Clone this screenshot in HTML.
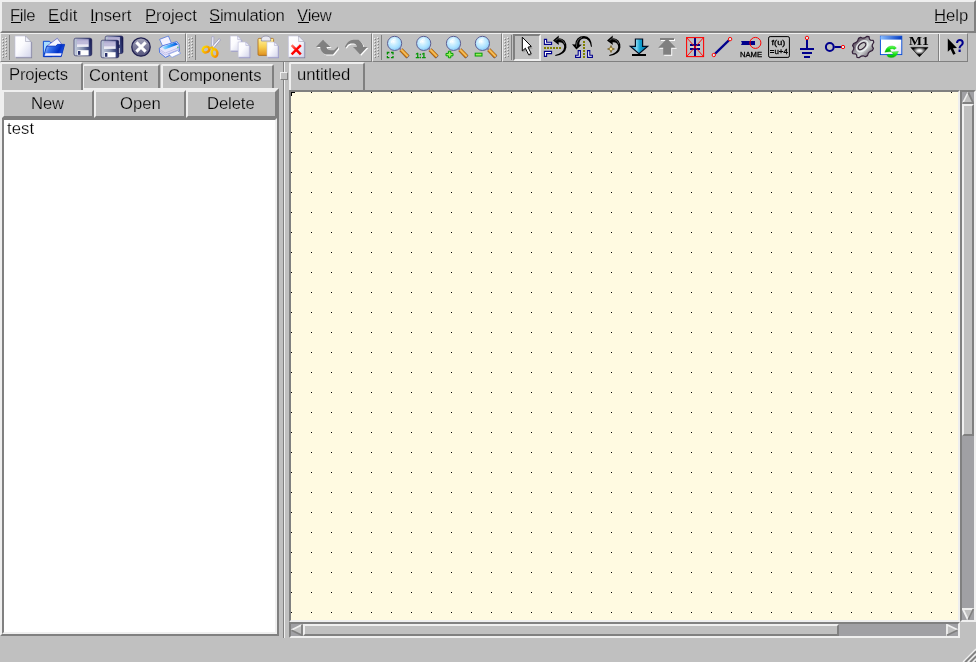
<!DOCTYPE html>
<html lang="en">
<head>
<meta charset="utf-8">
<title>Qucs</title>
<style>
html,body{margin:0;padding:0;}
body{width:976px;height:662px;overflow:hidden;background:#c0c0c0;position:relative;
 font-family:"Liberation Sans",sans-serif;font-size:16.67px;color:#000;}
.a{position:absolute;box-sizing:border-box;}
.r2{border:2px solid;border-color:#efefef #808080 #808080 #efefef;}
.r1{border:1px solid;border-color:#efefef #808080 #808080 #efefef;}
.s2{border:2px solid;border-color:#808080 #efefef #efefef #808080;}
.t{position:absolute;white-space:nowrap;line-height:20px;height:20px;will-change:transform;-webkit-text-stroke:0.25px #c0c0c0;}
#tTest{-webkit-text-stroke-color:#fff;}
u{text-decoration:none;position:relative;display:inline-block;}
u::after{content:'';position:absolute;left:1px;right:-1px;top:16px;height:1px;background:#000;}
.tab{border:2px solid;border-color:#efefef #808080 transparent #efefef;border-bottom:none;border-radius:2px 2px 0 0;}
.sep{position:absolute;width:1px;background:#808080;}
svg{position:absolute;overflow:visible;}
</style>
</head>
<body>
<!-- menubar -->
<div class="a r2" id="menubar" style="left:0;top:0;width:976px;height:33px;"></div>
<span class="t" id="mF" style="left:10.14px;top:6px;letter-spacing:-0.426px;"><u>F</u>ile</span>
<span class="t" id="mE" style="left:48.04px;top:6px;letter-spacing:0.265px;"><u>E</u>dit</span>
<span class="t" id="mI" style="left:90.3px;top:6px;letter-spacing:-0.076px;"><u>I</u>nsert</span>
<span class="t" id="mP" style="left:144.94px;top:6px;letter-spacing:-0.015px;"><u>P</u>roject</span>
<span class="t" id="mS" style="left:209.44px;top:6px;letter-spacing:-0.221px;"><u>S</u>imulation</span>
<span class="t" id="mV" style="left:296.9px;top:6px;letter-spacing:-0.459px;"><u>V</u>iew</span>
<span class="t" id="mH" style="left:934.34px;top:6px;letter-spacing:-0.034px;"><u>H</u>elp</span>
<!-- toolbars -->
<div class="a r1" style="left:0px;top:33px;width:186px;height:29px;"></div><i class="a" style="left:2px;top:38px;width:1px;height:1px;background:#efefef"></i><i class="a" style="left:3px;top:39px;width:1px;height:1px;background:#808080"></i><i class="a" style="left:5px;top:37px;width:1px;height:1px;background:#efefef"></i><i class="a" style="left:6px;top:38px;width:1px;height:1px;background:#808080"></i><i class="a" style="left:2px;top:41px;width:1px;height:1px;background:#efefef"></i><i class="a" style="left:3px;top:42px;width:1px;height:1px;background:#808080"></i><i class="a" style="left:5px;top:40px;width:1px;height:1px;background:#efefef"></i><i class="a" style="left:6px;top:41px;width:1px;height:1px;background:#808080"></i><i class="a" style="left:2px;top:44px;width:1px;height:1px;background:#efefef"></i><i class="a" style="left:3px;top:45px;width:1px;height:1px;background:#808080"></i><i class="a" style="left:5px;top:43px;width:1px;height:1px;background:#efefef"></i><i class="a" style="left:6px;top:44px;width:1px;height:1px;background:#808080"></i><i class="a" style="left:2px;top:47px;width:1px;height:1px;background:#efefef"></i><i class="a" style="left:3px;top:48px;width:1px;height:1px;background:#808080"></i><i class="a" style="left:5px;top:46px;width:1px;height:1px;background:#efefef"></i><i class="a" style="left:6px;top:47px;width:1px;height:1px;background:#808080"></i><i class="a" style="left:2px;top:50px;width:1px;height:1px;background:#efefef"></i><i class="a" style="left:3px;top:51px;width:1px;height:1px;background:#808080"></i><i class="a" style="left:5px;top:49px;width:1px;height:1px;background:#efefef"></i><i class="a" style="left:6px;top:50px;width:1px;height:1px;background:#808080"></i><i class="a" style="left:2px;top:53px;width:1px;height:1px;background:#efefef"></i><i class="a" style="left:3px;top:54px;width:1px;height:1px;background:#808080"></i><i class="a" style="left:5px;top:52px;width:1px;height:1px;background:#efefef"></i><i class="a" style="left:6px;top:53px;width:1px;height:1px;background:#808080"></i><i class="a" style="left:2px;top:56px;width:1px;height:1px;background:#efefef"></i><i class="a" style="left:3px;top:57px;width:1px;height:1px;background:#808080"></i><i class="a" style="left:5px;top:55px;width:1px;height:1px;background:#efefef"></i><i class="a" style="left:6px;top:56px;width:1px;height:1px;background:#808080"></i><i class="sep" style="left:9px;top:35px;height:25px"></i><div class="a r1" style="left:186px;top:33px;width:186px;height:29px;"></div><i class="a" style="left:188px;top:38px;width:1px;height:1px;background:#efefef"></i><i class="a" style="left:189px;top:39px;width:1px;height:1px;background:#808080"></i><i class="a" style="left:191px;top:37px;width:1px;height:1px;background:#efefef"></i><i class="a" style="left:192px;top:38px;width:1px;height:1px;background:#808080"></i><i class="a" style="left:188px;top:41px;width:1px;height:1px;background:#efefef"></i><i class="a" style="left:189px;top:42px;width:1px;height:1px;background:#808080"></i><i class="a" style="left:191px;top:40px;width:1px;height:1px;background:#efefef"></i><i class="a" style="left:192px;top:41px;width:1px;height:1px;background:#808080"></i><i class="a" style="left:188px;top:44px;width:1px;height:1px;background:#efefef"></i><i class="a" style="left:189px;top:45px;width:1px;height:1px;background:#808080"></i><i class="a" style="left:191px;top:43px;width:1px;height:1px;background:#efefef"></i><i class="a" style="left:192px;top:44px;width:1px;height:1px;background:#808080"></i><i class="a" style="left:188px;top:47px;width:1px;height:1px;background:#efefef"></i><i class="a" style="left:189px;top:48px;width:1px;height:1px;background:#808080"></i><i class="a" style="left:191px;top:46px;width:1px;height:1px;background:#efefef"></i><i class="a" style="left:192px;top:47px;width:1px;height:1px;background:#808080"></i><i class="a" style="left:188px;top:50px;width:1px;height:1px;background:#efefef"></i><i class="a" style="left:189px;top:51px;width:1px;height:1px;background:#808080"></i><i class="a" style="left:191px;top:49px;width:1px;height:1px;background:#efefef"></i><i class="a" style="left:192px;top:50px;width:1px;height:1px;background:#808080"></i><i class="a" style="left:188px;top:53px;width:1px;height:1px;background:#efefef"></i><i class="a" style="left:189px;top:54px;width:1px;height:1px;background:#808080"></i><i class="a" style="left:191px;top:52px;width:1px;height:1px;background:#efefef"></i><i class="a" style="left:192px;top:53px;width:1px;height:1px;background:#808080"></i><i class="a" style="left:188px;top:56px;width:1px;height:1px;background:#efefef"></i><i class="a" style="left:189px;top:57px;width:1px;height:1px;background:#808080"></i><i class="a" style="left:191px;top:55px;width:1px;height:1px;background:#efefef"></i><i class="a" style="left:192px;top:56px;width:1px;height:1px;background:#808080"></i><i class="sep" style="left:195px;top:35px;height:25px"></i><div class="a r1" style="left:372px;top:33px;width:130px;height:29px;"></div><i class="a" style="left:374px;top:38px;width:1px;height:1px;background:#efefef"></i><i class="a" style="left:375px;top:39px;width:1px;height:1px;background:#808080"></i><i class="a" style="left:377px;top:37px;width:1px;height:1px;background:#efefef"></i><i class="a" style="left:378px;top:38px;width:1px;height:1px;background:#808080"></i><i class="a" style="left:374px;top:41px;width:1px;height:1px;background:#efefef"></i><i class="a" style="left:375px;top:42px;width:1px;height:1px;background:#808080"></i><i class="a" style="left:377px;top:40px;width:1px;height:1px;background:#efefef"></i><i class="a" style="left:378px;top:41px;width:1px;height:1px;background:#808080"></i><i class="a" style="left:374px;top:44px;width:1px;height:1px;background:#efefef"></i><i class="a" style="left:375px;top:45px;width:1px;height:1px;background:#808080"></i><i class="a" style="left:377px;top:43px;width:1px;height:1px;background:#efefef"></i><i class="a" style="left:378px;top:44px;width:1px;height:1px;background:#808080"></i><i class="a" style="left:374px;top:47px;width:1px;height:1px;background:#efefef"></i><i class="a" style="left:375px;top:48px;width:1px;height:1px;background:#808080"></i><i class="a" style="left:377px;top:46px;width:1px;height:1px;background:#efefef"></i><i class="a" style="left:378px;top:47px;width:1px;height:1px;background:#808080"></i><i class="a" style="left:374px;top:50px;width:1px;height:1px;background:#efefef"></i><i class="a" style="left:375px;top:51px;width:1px;height:1px;background:#808080"></i><i class="a" style="left:377px;top:49px;width:1px;height:1px;background:#efefef"></i><i class="a" style="left:378px;top:50px;width:1px;height:1px;background:#808080"></i><i class="a" style="left:374px;top:53px;width:1px;height:1px;background:#efefef"></i><i class="a" style="left:375px;top:54px;width:1px;height:1px;background:#808080"></i><i class="a" style="left:377px;top:52px;width:1px;height:1px;background:#efefef"></i><i class="a" style="left:378px;top:53px;width:1px;height:1px;background:#808080"></i><i class="a" style="left:374px;top:56px;width:1px;height:1px;background:#efefef"></i><i class="a" style="left:375px;top:57px;width:1px;height:1px;background:#808080"></i><i class="a" style="left:377px;top:55px;width:1px;height:1px;background:#efefef"></i><i class="a" style="left:378px;top:56px;width:1px;height:1px;background:#808080"></i><i class="sep" style="left:381px;top:35px;height:25px"></i><div class="a r1" style="left:502px;top:33px;width:466px;height:29px;"></div><i class="a" style="left:504px;top:38px;width:1px;height:1px;background:#efefef"></i><i class="a" style="left:505px;top:39px;width:1px;height:1px;background:#808080"></i><i class="a" style="left:507px;top:37px;width:1px;height:1px;background:#efefef"></i><i class="a" style="left:508px;top:38px;width:1px;height:1px;background:#808080"></i><i class="a" style="left:504px;top:41px;width:1px;height:1px;background:#efefef"></i><i class="a" style="left:505px;top:42px;width:1px;height:1px;background:#808080"></i><i class="a" style="left:507px;top:40px;width:1px;height:1px;background:#efefef"></i><i class="a" style="left:508px;top:41px;width:1px;height:1px;background:#808080"></i><i class="a" style="left:504px;top:44px;width:1px;height:1px;background:#efefef"></i><i class="a" style="left:505px;top:45px;width:1px;height:1px;background:#808080"></i><i class="a" style="left:507px;top:43px;width:1px;height:1px;background:#efefef"></i><i class="a" style="left:508px;top:44px;width:1px;height:1px;background:#808080"></i><i class="a" style="left:504px;top:47px;width:1px;height:1px;background:#efefef"></i><i class="a" style="left:505px;top:48px;width:1px;height:1px;background:#808080"></i><i class="a" style="left:507px;top:46px;width:1px;height:1px;background:#efefef"></i><i class="a" style="left:508px;top:47px;width:1px;height:1px;background:#808080"></i><i class="a" style="left:504px;top:50px;width:1px;height:1px;background:#efefef"></i><i class="a" style="left:505px;top:51px;width:1px;height:1px;background:#808080"></i><i class="a" style="left:507px;top:49px;width:1px;height:1px;background:#efefef"></i><i class="a" style="left:508px;top:50px;width:1px;height:1px;background:#808080"></i><i class="a" style="left:504px;top:53px;width:1px;height:1px;background:#efefef"></i><i class="a" style="left:505px;top:54px;width:1px;height:1px;background:#808080"></i><i class="a" style="left:507px;top:52px;width:1px;height:1px;background:#efefef"></i><i class="a" style="left:508px;top:53px;width:1px;height:1px;background:#808080"></i><i class="a" style="left:504px;top:56px;width:1px;height:1px;background:#efefef"></i><i class="a" style="left:505px;top:57px;width:1px;height:1px;background:#808080"></i><i class="a" style="left:507px;top:55px;width:1px;height:1px;background:#efefef"></i><i class="a" style="left:508px;top:56px;width:1px;height:1px;background:#808080"></i><i class="sep" style="left:511px;top:35px;height:25px"></i><i class="sep" style="left:938px;top:34px;height:27px"></i><i class="sep" style="left:939px;top:34px;height:27px;background:#efefef"></i>
<div class="a s2" style="left:513px;top:34px;width:28px;height:27px;"></div>
<svg id="icons" style="left:0;top:33px;will-change:transform" width="976" height="29" viewBox="0 33 976 29">
<defs>
<linearGradient id="gPage" x1="0" y1="0" x2="1" y2="1"><stop offset="0" stop-color="#ffffff"/><stop offset="0.45" stop-color="#fbfbfe"/><stop offset="1" stop-color="#d4d6ec"/></linearGradient>
<linearGradient id="gFl" x1="0" y1="0.1" x2="1" y2="0"><stop offset="0" stop-color="#c4ccdc"/><stop offset="0.45" stop-color="#8490b0"/><stop offset="0.8" stop-color="#36407a"/><stop offset="1" stop-color="#0e0e44"/></linearGradient>
<linearGradient id="gLab" x1="0" y1="0" x2="0" y2="1"><stop offset="0" stop-color="#a9a4cc"/><stop offset="0.6" stop-color="#d0cde6"/><stop offset="1" stop-color="#ffffff"/></linearGradient>
<radialGradient id="gLens" cx="0.42" cy="0.36" r="0.62"><stop offset="0" stop-color="#ffffff"/><stop offset="0.35" stop-color="#d0f0ff"/><stop offset="0.75" stop-color="#a8e0ff"/><stop offset="1" stop-color="#90c8f4"/></radialGradient>
<linearGradient id="gHan" x1="0" y1="1" x2="1" y2="0"><stop offset="0.3" stop-color="#8c4804"/><stop offset="0.4" stop-color="#d88c20"/><stop offset="0.52" stop-color="#fccc70"/><stop offset="0.62" stop-color="#e09828"/><stop offset="0.7" stop-color="#98540c"/></linearGradient>
<linearGradient id="gClose" x1="0" y1="0" x2="0" y2="1"><stop offset="0" stop-color="#a4a4ba"/><stop offset="1" stop-color="#54547c"/></linearGradient>
<linearGradient id="gFold" x1="0" y1="0" x2="1" y2="0.3"><stop offset="0" stop-color="#d8ecff"/><stop offset="0.35" stop-color="#3c78f0"/><stop offset="0.8" stop-color="#0030c8"/><stop offset="1" stop-color="#2050e0"/></linearGradient>
<linearGradient id="gClip" x1="0" y1="0" x2="0" y2="1"><stop offset="0" stop-color="#fff0a0"/><stop offset="0.5" stop-color="#f8d050"/><stop offset="1" stop-color="#e09020"/></linearGradient>
<linearGradient id="gSc" x1="0" y1="0" x2="1" y2="1"><stop offset="0" stop-color="#ffe000"/><stop offset="1" stop-color="#f08000"/></linearGradient>
<linearGradient id="gDn" x1="0" y1="0" x2="1" y2="0"><stop offset="0" stop-color="#0080b8"/><stop offset="0.36" stop-color="#7cd4f0"/><stop offset="0.56" stop-color="#10a0d0"/><stop offset="1" stop-color="#006898"/></linearGradient>
<linearGradient id="gGear" x1="0" y1="0" x2="1" y2="1"><stop offset="0.05" stop-color="#302034"/><stop offset="0.25" stop-color="#6c6070"/><stop offset="0.45" stop-color="#a4a4a8"/><stop offset="0.6" stop-color="#d0d4d4"/><stop offset="0.76" stop-color="#8c8890"/><stop offset="0.97" stop-color="#382838"/></linearGradient>
<linearGradient id="gTitle" x1="0" y1="0" x2="1" y2="0"><stop offset="0" stop-color="#8cc0ff"/><stop offset="1" stop-color="#0038c0"/></linearGradient>
<linearGradient id="gWin" x1="0" y1="0" x2="1" y2="1"><stop offset="0" stop-color="#ffffff"/><stop offset="0.6" stop-color="#ffffff"/><stop offset="1" stop-color="#dcdcf4"/></linearGradient>
<radialGradient id="gTri" cx="0.5" cy="0.36" r="0.42"><stop offset="0" stop-color="#ffffff"/><stop offset="0.3" stop-color="#e0e0e0"/><stop offset="0.65" stop-color="#707070"/><stop offset="1" stop-color="#000000"/></radialGradient>
<linearGradient id="gPrn" x1="0" y1="0" x2="1" y2="0"><stop offset="0" stop-color="#b0ecff"/><stop offset="0.5" stop-color="#30a0f8"/><stop offset="1" stop-color="#0050d8"/></linearGradient>
<linearGradient id="gGrn" x1="0" y1="0" x2="0" y2="1"><stop offset="0" stop-color="#70ff60"/><stop offset="0.5" stop-color="#10e010"/><stop offset="1" stop-color="#00a800"/></linearGradient>
<linearGradient id="gRed" x1="0" y1="0" x2="1" y2="1"><stop offset="0" stop-color="#ff8070"/><stop offset="0.5" stop-color="#ff0000"/><stop offset="1" stop-color="#f00000"/></linearGradient>
</defs>
<!-- new --><path d="M16,57.6 H31.5 V42" fill="none" stroke="#8888a0" stroke-width="1.2"/><path d="M15,36 H25.5 L31.0,42 V57.1 H15 Z" fill="url(#gPage)" stroke="#c0c0dc" stroke-width="0.6"/><path d="M25.5,36 V41.5 H31.0 Z" fill="#eef0fa" stroke="#8888a0" stroke-width="0.5" opacity="0.9"/>
<!-- open -->
<path d="M43.4,41.3 H49.5 L50.5,42.6 H52 V56.6 H43.4 Z" fill="#a8dcff" stroke="#0040d0" stroke-width="0.9"/>
<path d="M47,46 L57.3,38.3 L61.4,43.8 L50,52 Z" fill="#f4f4ff" stroke="#5058c0" stroke-width="0.7"/>
<path d="M46.6,46.2 H56 L57.4,44.4 H64.6 L61.2,56.6 H43.6 Z" fill="url(#gFold)" stroke="#0030c0" stroke-width="0.9"/>
<path d="M45.6,53.3 H61.6 L60.9,55.8 H44.8 Z" fill="#f4f0ff"/>

<!-- save --><rect x="74" y="38.2" width="17.8" height="17.6" rx="1.8" fill="url(#gFl)" stroke="#181850" stroke-width="0.6"/><rect x="77" y="39.2" width="11.7" height="7.6" fill="url(#gLab)"/><rect x="77" y="42.800000000000004" width="11.7" height="0.6" fill="#a09cc4" opacity="0.8"/><rect x="77.4" y="50.2" width="11.2" height="5.2" fill="#ffffff"/><rect x="78" y="51.0" width="2.4" height="3.8" fill="#28306c"/>
<!-- saveall --><rect x="105.2" y="36" width="17.8" height="17.6" rx="1.8" fill="url(#gFl)" stroke="#181850" stroke-width="0.6"/><rect x="108.2" y="37" width="11.7" height="7.6" fill="url(#gLab)"/><rect x="108.2" y="40.6" width="11.7" height="0.6" fill="#a09cc4" opacity="0.8"/><rect x="108.60000000000001" y="48" width="11.2" height="5.2" fill="#ffffff"/><rect x="109.2" y="48.8" width="2.4" height="3.8" fill="#28306c"/><rect x="101" y="40.2" width="17.8" height="17.6" rx="1.8" fill="url(#gFl)" stroke="#181850" stroke-width="0.6"/><rect x="104" y="41.2" width="11.7" height="7.6" fill="url(#gLab)"/><rect x="104" y="44.800000000000004" width="11.7" height="0.6" fill="#a09cc4" opacity="0.8"/><rect x="104.4" y="52.2" width="11.2" height="5.2" fill="#ffffff"/><rect x="105" y="53.0" width="2.4" height="3.8" fill="#28306c"/>
<!-- close -->
<circle cx="141" cy="47" r="9.2" fill="url(#gClose)" stroke="#202050" stroke-width="1.3"/>
<path d="M136.4,42.4 L145.6,51.6 M145.6,42.4 L136.4,51.6" stroke="#ffffff" stroke-width="3"/>

<!-- print -->
<path d="M159.6,39.4 L168.4,36 L171.6,43.6 L163,47 Z" fill="#f4f2ff" stroke="#4068d8" stroke-width="0.7"/>
<path d="M159.3,48.2 L163,45.6 L176.8,41.6 L179,44.6 L179.4,50.8 L165.4,57.4 L159.6,52.6 Z" fill="#e8e6fa" stroke="#3060e0" stroke-width="0.8"/>
<path d="M162,47 L175.6,42.4 L178,44.6 L164.8,49.6 Z" fill="url(#gPrn)"/>
<path d="M159.8,49.5 L165.2,53 L179,47.6 M159.8,51 L165.3,54.8 L179.2,49.2" stroke="#a8a8e0" stroke-width="0.6" fill="none"/>
<path d="M168.6,54.2 L177.4,50.6 L180.8,53.2 L172,57.4 Z" fill="#ffffff" stroke="#6080e0" stroke-width="0.6"/>
<rect x="177.4" y="46.6" width="0.9" height="1.6" fill="#20c040"/>

<!-- cut -->
<path d="M212,36.6 L213.8,36.8 L213.6,47.6 L211.6,47 Z" fill="#f8f8ff" stroke="#9090c0" stroke-width="0.6"/>
<path d="M219.2,38.6 L220.4,40 L213.2,48.6 L211.4,47.4 Z" fill="#f8f8ff" stroke="#7878b0" stroke-width="0.6"/>
<ellipse cx="206" cy="49.6" rx="3.4" ry="2.8" transform="rotate(-20 206 49.6)" fill="none" stroke="url(#gSc)" stroke-width="2.4"/>
<ellipse cx="214.6" cy="53" rx="2.8" ry="3.8" transform="rotate(-10 214.6 53)" fill="none" stroke="url(#gSc)" stroke-width="2.4"/>
<path d="M209.4,48.2 L212.6,47.4 L213.6,49.6" stroke="#f8c000" stroke-width="1.8" fill="none"/>

<!-- copy --><path d="M231.2,51.2 H241.6 V40" fill="none" stroke="#9c9cc8" stroke-width="1.2"/><path d="M230.2,36 H237.6 L241.1,40 V50.7 H230.2 Z" fill="url(#gPage)" stroke="#c0c0dc" stroke-width="0.6"/><path d="M237.6,36 V39.5 H241.1 Z" fill="#eef0fa" stroke="#9c9cc8" stroke-width="0.5" opacity="0.9"/><path d="M239.2,57.6 H249.79999999999998 V46" fill="none" stroke="#9c9cc8" stroke-width="1.2"/><path d="M238.2,42 H245.79999999999998 L249.29999999999998,46 V57.1 H238.2 Z" fill="url(#gPage)" stroke="#c0c0dc" stroke-width="0.6"/><path d="M245.79999999999998,42 V45.5 H249.29999999999998 Z" fill="#eef0fa" stroke="#9c9cc8" stroke-width="0.5" opacity="0.9"/>
<!-- paste -->
<rect x="258" y="38.4" width="15.6" height="17" rx="1.2" fill="url(#gClip)" stroke="#a86818" stroke-width="0.8"/>
<path d="M261.4,41 V39.4 Q261.4,36 266,36 Q270.6,36 270.6,39.4 V41 Z" fill="#e8e8f0" stroke="#8c8ca4" stroke-width="0.8"/>
<path d="M268,57.6 H278.4 V46" fill="none" stroke="#9c9cc8" stroke-width="1.2"/><path d="M267,42 H274.4 L277.9,46 V57.1 H267 Z" fill="url(#gPage)" stroke="#c0c0dc" stroke-width="0.6"/><path d="M274.4,42 V45.5 H277.9 Z" fill="#eef0fa" stroke="#9c9cc8" stroke-width="0.5" opacity="0.9"/>
<!-- delete --><path d="M289.4,57.6 H304.59999999999997 V42" fill="none" stroke="#8888a0" stroke-width="1.2"/><path d="M288.4,36 H298.59999999999997 L304.09999999999997,42 V57.1 H288.4 Z" fill="url(#gPage)" stroke="#c0c0dc" stroke-width="0.6"/><path d="M298.59999999999997,36 V41.5 H304.09999999999997 Z" fill="#eef0fa" stroke="#8888a0" stroke-width="0.5" opacity="0.9"/><path d="M291.6,45.2 L300.8,54.4 M300.8,45.2 L291.6,54.4" stroke="url(#gRed)" stroke-width="2.6"/>
<!-- undo/redo --><path d="M323,39.8 L330.6,47 L326.4,47 Q327.5,50.2 331,50.2 L334,50.2 L338,46.6 L338,48.6 L333,54.6 L325.6,54.6 Q320.4,52 320.2,47 L316,47 Z" fill="#ffffff" transform="translate(1,1)"/><path d="M323,39.8 L330.6,47 L326.4,47 Q327.5,50.2 331,50.2 L334,50.2 L338,46.6 L338,48.6 L333,54.6 L325.6,54.6 Q320.4,52 320.2,47 L316,47 Z" fill="#808080"/><path d="M345,46.4 Q348.2,39.8 353.4,39.8 L358.4,39.8 Q362.6,42.6 363.4,47 L367.4,47 L360.2,54.8 L353,47 L357,47 Q356.4,44 353.4,43.6 L350.6,43.6 Q347.6,44.2 345.6,47.8 Z" fill="#ffffff" transform="translate(1,1)"/><path d="M345,46.4 Q348.2,39.8 353.4,39.8 L358.4,39.8 Q362.6,42.6 363.4,47 L367.4,47 L360.2,54.8 L353,47 L357,47 Q356.4,44 353.4,43.6 L350.6,43.6 Q347.6,44.2 345.6,47.8 Z" fill="#808080"/>
<path d="M399.6,48.4 L401.8,50.6" stroke="#7474a0" stroke-width="1.8"/><path d="M407.20000000000005,56.2 L408.20000000000005,57.2" stroke="#505078" stroke-width="3.8" stroke-linecap="butt"/><path d="M400.90000000000003,49.6 L407.8,56.7" stroke="url(#gHan)" stroke-width="4.2" stroke-linecap="butt"/><circle cx="394.6" cy="43.4" r="7.1" fill="url(#gLens)" stroke="#5c5c90" stroke-width="1"/><path d="M391.40000000000003,42.8 a4.2,4.2 0 0 1 4.4,-3.8" stroke="#ffffff" stroke-width="0.9" fill="none" opacity="0.9"/>
<path d="M428.7,48.4 L430.9,50.6" stroke="#7474a0" stroke-width="1.8"/><path d="M436.3,56.2 L437.3,57.2" stroke="#505078" stroke-width="3.8" stroke-linecap="butt"/><path d="M430.0,49.6 L436.9,56.7" stroke="url(#gHan)" stroke-width="4.2" stroke-linecap="butt"/><circle cx="423.7" cy="43.4" r="7.1" fill="url(#gLens)" stroke="#5c5c90" stroke-width="1"/><path d="M420.5,42.8 a4.2,4.2 0 0 1 4.4,-3.8" stroke="#ffffff" stroke-width="0.9" fill="none" opacity="0.9"/>
<path d="M458.5,48.4 L460.7,50.6" stroke="#7474a0" stroke-width="1.8"/><path d="M466.1,56.2 L467.1,57.2" stroke="#505078" stroke-width="3.8" stroke-linecap="butt"/><path d="M459.8,49.6 L466.7,56.7" stroke="url(#gHan)" stroke-width="4.2" stroke-linecap="butt"/><circle cx="453.5" cy="43.4" r="7.1" fill="url(#gLens)" stroke="#5c5c90" stroke-width="1"/><path d="M450.3,42.8 a4.2,4.2 0 0 1 4.4,-3.8" stroke="#ffffff" stroke-width="0.9" fill="none" opacity="0.9"/>
<path d="M487.4,48.4 L489.59999999999997,50.6" stroke="#7474a0" stroke-width="1.8"/><path d="M495.0,56.2 L496.0,57.2" stroke="#505078" stroke-width="3.8" stroke-linecap="butt"/><path d="M488.7,49.6 L495.59999999999997,56.7" stroke="url(#gHan)" stroke-width="4.2" stroke-linecap="butt"/><circle cx="482.4" cy="43.4" r="7.1" fill="url(#gLens)" stroke="#5c5c90" stroke-width="1"/><path d="M479.2,42.8 a4.2,4.2 0 0 1 4.4,-3.8" stroke="#ffffff" stroke-width="0.9" fill="none" opacity="0.9"/>
<path d="M387.4,54.4 V52.5 H389.4 M391,52.5 H393 V54.4 M393,56 V57.6 H391 M389.4,57.6 H387.4 V56" stroke="#008c00" stroke-width="1.3" fill="none"/>
<text x="415.4" y="57.9" font-family="Liberation Sans, sans-serif" font-weight="bold" font-size="7.6" fill="#009600" stroke="#009600" stroke-width="0.3" textLength="10.2" lengthAdjust="spacingAndGlyphs">1:1</text>
<path d="M448.4,51.2 H450.8 V53.4 H453 V55.8 H450.8 V57.8 H448.4 V55.8 H446 V53.4 H448.4 Z" fill="#a0f060" stroke="#00a000" stroke-width="1"/>
<rect x="475.2" y="53.2" width="6.8" height="2.8" fill="#a0f060" stroke="#00a000" stroke-width="1"/>

<!-- select -->
<path d="M523.4,39 V52.8 L526.4,50 L529.2,56.2 L531.8,55 L529,48.8 L532.8,48.4 Z" fill="#606060" opacity="0.45"/>
<path d="M522.3,37.2 V51 L525.4,48.2 L528.6,54.7 L531.2,53.6 L528,47.2 L531.3,46.4 Z" fill="#ffffff" stroke="#000000" stroke-width="1"/>

<!-- mirrorY --><path d="M544.4,39.4 H546.6 V42.2 H551.6 V44.4 H544.4 Z" fill="#ffffff" stroke="#00008c" stroke-width="1.1"/><path d="M544.4,56.4 H546.6 V53.6 H551.6 V51.4 H544.4 Z" fill="#ffffff" stroke="#00008c" stroke-width="1.1"/>
<rect x="544" y="47" width="2" height="2" fill="#808000"/><rect x="547" y="47" width="2" height="2" fill="#808000"/><rect x="550" y="47" width="2" height="2" fill="#808000"/><rect x="553" y="47" width="2" height="2" fill="#808000"/><rect x="556" y="47" width="2" height="2" fill="#808000"/><rect x="559" y="47" width="2" height="2" fill="#808000"/>
<path d="M553,40.4 L558.8,35.6 L558.6,38 Q566.8,39 566.4,47.4 Q565.4,54.6 555.4,55.9 L555.2,55 Q563.6,53 564.2,47 Q564.2,42 558.6,42.2 L558.8,45 Z" fill="#000000"/><path d="M555.6,40.4 L558,38.6 Q563.4,39.6 564.6,44" stroke="#686868" stroke-width="0.8" fill="none"/>
<!-- mirrorX --><path d="M580.4,50.6 V57.4 H575.6 V55.2 H578.2 V50.6 Z" fill="#ffffff" stroke="#00008c" stroke-width="1.1"/><path d="M587.6,50.6 V57.4 H592.4 V55.2 H589.8 V50.6 Z" fill="#ffffff" stroke="#00008c" stroke-width="1.1"/>
<rect x="583" y="41" width="2" height="2" fill="#808000"/><rect x="583" y="44" width="2" height="2" fill="#808000"/><rect x="583" y="47" width="2" height="2" fill="#808000"/><rect x="583" y="50" width="2" height="2" fill="#808000"/><rect x="583" y="53" width="2" height="2" fill="#808000"/><rect x="583" y="56" width="2" height="2" fill="#808000"/>
<path d="M572,44.2 L575.2,44.4 Q575.8,36.2 584,36 Q591.6,36.4 592,46.8 L591,46.8 Q589.8,38.8 584,38.6 Q579.4,38.8 579.2,44.6 L581.8,44.8 L576.4,49.6 Z" fill="#000000"/><path d="M576.4,46.8 L576.8,42.8 Q577.8,38.4 582,37.4" stroke="#686868" stroke-width="0.8" fill="none"/>
<!-- rotate --><path d="M607,40.4 L612.8,35.6 L612.6,38 Q620.8,39 620.4,47.4 Q619.4,54.6 609.4,55.9 L609.2,55 Q617.6,53 618.2,47 Q618.2,42 612.6,42.2 L612.8,45 Z" fill="#000000"/><path d="M609.6,40.4 L612,38.6 Q617.4,39.6 618.6,44" stroke="#686868" stroke-width="0.8" fill="none"/>
<path d="M611,45.6 L611.9,48.1 L614.4,49 L611.9,49.9 L611,52.4 L610.1,49.9 L607.6,49 L610.1,48.1 Z" fill="#fce890" stroke="#5c4408" stroke-width="0.7"/>
<!-- down -->
<path d="M635.4,39 H642.6 V46.4 H647.6 L639,53.6 L630.4,46.4 H635.4 Z" fill="url(#gDn)" stroke="#000c20" stroke-width="1.2"/>
<rect x="632" y="54" width="14" height="2" fill="#000000"/>

<!-- up --><path d="M660,38 H674 V40 H668.6 L676,47.8 H671.2 V54.8 H663.2 V47.8 H658.2 L665.6,40 H660 Z" fill="#ffffff" transform="translate(1,1)"/><path d="M660,38 H674 V40 H668.6 L676,47.8 H671.2 V54.8 H663.2 V47.8 H658.2 L665.6,40 H660 Z" fill="#808080"/>
<!-- deactivate -->
<rect x="690" y="44" width="10" height="2" fill="#00008c"/><rect x="690" y="48" width="10" height="2" fill="#00008c"/>
<rect x="690" y="46" width="10" height="2" fill="#d6d6cc"/>
<rect x="694" y="38" width="2" height="6" fill="#00008c"/><rect x="694" y="50" width="2" height="6" fill="#00008c"/>
<rect x="694" y="44" width="2" height="6" fill="#00008c"/>
<rect x="686.6" y="37.6" width="17" height="19" fill="none" stroke="#ff0000" stroke-width="1.05"/>
<path d="M686.6,37.6 L703.6,56.6 M703.6,37.6 L686.6,56.6" stroke="#ff0000" stroke-width="0.9"/>

<!-- wire -->
<path d="M715.2,53.6 L728.8,40.4" stroke="#00008c" stroke-width="2.2"/>
<circle cx="713.8" cy="55" r="1.7" fill="#d8f0f0" stroke="#ff0000" stroke-width="1"/>
<circle cx="730.1" cy="39.1" r="1.7" fill="#d8f0f0" stroke="#ff0000" stroke-width="1"/>

<!-- label -->
<path d="M741,41 H755 V45 H741 L742,43 Z" fill="#00008c"/>
<circle cx="755.4" cy="42.9" r="5.5" fill="none" stroke="#ff0000" stroke-width="1"/>
<text x="740" y="56.7" font-family="Liberation Sans, sans-serif" font-size="7.4" fill="#000" stroke="#000" stroke-width="0.3" textLength="22" lengthAdjust="spacingAndGlyphs">NAME</text>

<!-- equation -->
<rect x="768.6" y="36.6" width="20.8" height="20.8" rx="1.5" fill="none" stroke="#000" stroke-width="1"/>
<text x="771.6" y="44.6" font-family="Liberation Sans, sans-serif" font-size="7.6" fill="#000" stroke="#000" stroke-width="0.3" textLength="13.6" lengthAdjust="spacingAndGlyphs">f(u)</text>
<text x="769.8" y="53.9" font-family="Liberation Sans, sans-serif" font-size="7.6" fill="#000" stroke="#000" stroke-width="0.3" textLength="18" lengthAdjust="spacingAndGlyphs">=u+4</text>

<!-- ground -->
<rect x="806" y="39.6" width="2" height="8.4" fill="#00008c"/>
<rect x="800" y="48" width="14" height="2" fill="#00008c"/><rect x="802" y="52" width="10" height="2" fill="#00008c"/><rect x="804" y="56" width="6" height="2" fill="#00008c"/>
<circle cx="807" cy="37.9" r="1.7" fill="#d8f0f0" stroke="#ff0000" stroke-width="1"/>

<!-- port -->
<circle cx="829.8" cy="47" r="3.9" fill="none" stroke="#00008c" stroke-width="2"/>
<rect x="834.4" y="46" width="7.2" height="2" fill="#00008c"/>
<circle cx="843" cy="47" r="1.7" fill="#d8f0f0" stroke="#ff0000" stroke-width="1"/>

<!-- gear --><polygon points="873.2,40.4 873.8,42.2 872.3,44.7 872.2,46.4 873.4,48.4 872.4,50.5 869.8,51.6 868.4,53.0 867.5,55.6 865.4,56.7 863.2,55.8 861.4,56.1 859.0,57.7 857.0,57.3 856.6,54.9 855.4,53.8 852.8,53.6 852.2,51.8 853.7,49.3 853.8,47.6 852.6,45.6 853.6,43.5 856.2,42.4 857.6,41.0 858.5,38.4 860.6,37.3 862.8,38.2 864.6,37.9 867.0,36.3 869.0,36.7 869.4,39.1 870.6,40.2" fill="url(#gGear)" stroke="#34203a" stroke-width="1.2" stroke-linejoin="round"/>
<ellipse cx="862.2" cy="46.2" rx="6.6" ry="4.3" transform="rotate(-42 862.2 46.2)" fill="none" stroke="#f0f4f4" stroke-width="1.5" opacity="0.85"/>
<ellipse cx="862" cy="46.1" rx="4.4" ry="2.5" transform="rotate(-42 862 46.1)" fill="#c8c8c8" stroke="#2c1c30" stroke-width="1"/>
<!-- window -->
<rect x="880.4" y="36.2" width="21.4" height="18.4" fill="url(#gWin)" stroke="#0048d8" stroke-width="0.9"/>
<rect x="880.4" y="36.2" width="21.4" height="3.4" fill="url(#gTitle)"/>
<path d="M885.4,50.8 Q887,45.8 892.4,46 Q895.2,46.2 896.4,48 L894.4,49.4 Q892.2,48 889.8,49.4 L891.4,51.6 L884.8,52.2 Z" fill="url(#gGrn)" stroke="#18c018" stroke-width="0.4"/>
<path d="M897.8,52.6 Q896.2,57.8 890.8,57.6 Q888,57.4 886.8,55.6 L888.8,54.2 Q891,55.6 893.4,54.2 L891.8,52 L898.4,51.4 Z" fill="url(#gGrn)" stroke="#18c018" stroke-width="0.4"/>

<!-- marker -->
<text x="909" y="44.6" font-family="Liberation Serif, serif" font-weight="bold" font-size="13.3" fill="#000" textLength="19.8" lengthAdjust="spacingAndGlyphs">M1</text>
<path d="M910.8,47.4 H928 L919.4,56.8 Z" fill="url(#gTri)" stroke="#000" stroke-width="0.6"/>

<!-- whatsthis -->
<path d="M947.8,38.6 V51.8 L950.6,49.2 L953.2,54.8 L955.6,53.8 L953,48.2 L957,48 Z" fill="#000"/>
<text x="955.2" y="52" font-family="Liberation Sans, sans-serif" font-weight="bold" font-size="17.5" fill="#00008c" textLength="9.4" lengthAdjust="spacingAndGlyphs">?</text>

</svg>

<!-- left tab widget -->
<div class="a r2" id="pane" style="left:0;top:88px;width:279px;height:548px;"></div>
<div class="a tab" id="tabContent" style="left:83px;top:64px;width:77px;height:24px;border-left-width:1px"></div>
<div class="a tab" id="tabComponents" style="left:161px;top:64px;width:113px;height:24px;"></div>
<div class="a tab" id="tabProjects" style="left:0px;top:62px;width:83px;height:28px;background:#c0c0c0;"></div>
<span class="t" id="tProjects" style="left:9.3px;top:65px;letter-spacing:-0.173px;">Projects</span>
<span class="t" id="tContent" style="left:88.5px;top:66px;letter-spacing:0.078px;">Content</span>
<span class="t" id="tComponents" style="left:167.5px;top:66px;letter-spacing:-0.108px;">Components</span>

<!-- buttons -->
<div class="a r2" id="bNew" style="left:2px;top:90px;width:92px;height:28px;"></div>
<div class="a r2" id="bOpen" style="left:94px;top:90px;width:92px;height:28px;"></div>
<div class="a r2" id="bDelete" style="left:186px;top:90px;width:91px;height:28px;"></div>
<span class="t" id="tNew" style="left:30.74px;top:94px;letter-spacing:-0.091px;">New</span>
<span class="t" id="tOpen" style="left:119.5px;top:94px;letter-spacing:0.037px;">Open</span>
<span class="t" id="tDelete" style="left:207.3px;top:94px;letter-spacing:-0.097px;">Delete</span>

<!-- list -->
<div class="a s2" id="list" style="left:2px;top:118px;width:275px;height:516px;background:#fff;"></div>
<span class="t" id="tTest" style="left:7.3px;top:119px;letter-spacing:0.1px;">test</span>

<!-- splitter -->
<div class="a" style="left:283px;top:62px;width:1px;height:576px;background:#808080;"></div>
<div class="a" style="left:284px;top:62px;width:1px;height:576px;background:#efefef;"></div>
<div class="a r1" style="left:280px;top:72px;width:8px;height:8px;background:#c0c0c0;"></div>

<!-- doc tab -->
<div class="a tab" id="tabDoc" style="left:289px;top:62px;width:76px;height:28px;"></div>
<span class="t" id="tUntitled" style="left:297.42px;top:65px;letter-spacing:-0.064px;">untitled</span>

<!-- canvas -->
<div class="a s2" id="canvas" style="left:289px;top:90px;width:671px;height:532px;background-color:#fffae1;"></div>
<svg id="grid" style="left:291px;top:92px" width="667" height="528" shape-rendering="crispEdges">
 <defs><pattern id="gp" x="0" y="0" width="20" height="20" patternUnits="userSpaceOnUse"><rect x="0" y="0" width="1" height="1" fill="#000"/></pattern></defs>
 <rect x="0" y="0" width="667" height="528" fill="url(#gp)"/>
 <rect x="0" y="0" width="4" height="1" fill="#000"/><rect x="0" y="0" width="1" height="4" fill="#000"/>
</svg>

<!-- v scrollbar -->
<div class="a s2" style="left:960px;top:90px;width:16px;height:532px;background:#a0a0a4;"></div>
<svg style="left:962px;top:92px;overflow:hidden" width="12" height="12"><polygon points="6,0 12,12 0,12" fill="#c0c0c0"/><path d="M6,0.5 L0.8,11" stroke="#efefef" stroke-width="1.6" fill="none"/><path d="M6.3,0.5 L11.3,11 L0.5,11" stroke="#808080" stroke-width="1.8" fill="none"/></svg>
<div class="a r2" style="left:962px;top:104px;width:12px;height:332px;background:#c0c0c0;"></div>
<svg style="left:962px;top:608px;overflow:hidden" width="12" height="12"><polygon points="0,0 12,0 6,12" fill="#c0c0c0"/><path d="M11.5,1 L0.8,1 L5.8,11.5" stroke="#efefef" stroke-width="1.8" fill="none"/><path d="M6.3,11.5 L11.3,1" stroke="#808080" stroke-width="1.6" fill="none"/></svg>

<!-- h scrollbar -->
<div class="a s2" style="left:289px;top:622px;width:671px;height:16px;background:#a0a0a4;"></div>
<svg style="left:291px;top:624px;overflow:hidden" width="12" height="12"><polygon points="0,6 12,0 12,12" fill="#c0c0c0"/><path d="M0.5,6 L11,0.8" stroke="#efefef" stroke-width="1.6" fill="none"/><path d="M0.5,6.3 L11,11.3 L11,0.5" stroke="#808080" stroke-width="1.8" fill="none"/></svg>
<div class="a r2" style="left:303px;top:624px;width:536px;height:12px;background:#c0c0c0;"></div>
<svg style="left:946px;top:624px;overflow:hidden" width="12" height="12"><polygon points="0,0 12,6 0,12" fill="#c0c0c0"/><path d="M1,11.5 L1,0.8 L11.5,5.8" stroke="#efefef" stroke-width="1.8" fill="none"/><path d="M11.5,6.3 L1,11.3" stroke="#808080" stroke-width="1.6" fill="none"/></svg>

<!-- size grip -->
<svg style="left:961px;top:647px" width="15" height="15" viewBox="0 0 15 15">
 <path d="M4.2,15 L15,4.2 M9.2,15 L15,9.2 M14.2,15 L15,14.2" stroke="#808080" stroke-width="2.1"/>
 <path d="M2,15 L15,2 M7,15 L15,7 M12,15 L15,12" stroke="#efefef" stroke-width="1.3"/>
</svg>
</body>
</html>
